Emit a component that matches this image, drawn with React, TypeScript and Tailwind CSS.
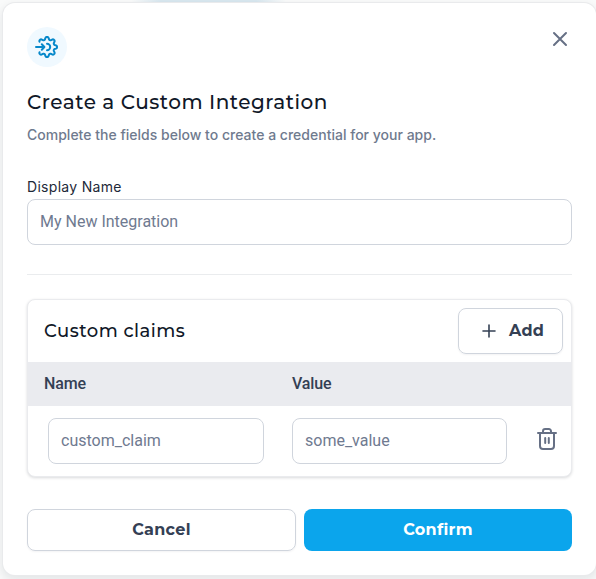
const gearPoints: string[] = [];
for (let deg = -145; deg <= 145; deg += 2) {
  const t = (deg * Math.PI) / 180;
  const r = 8.75 + 1.4 * Math.tanh(1.5 * Math.cos(8 * t));
  gearPoints.push(`${(12 + r * Math.cos(t)).toFixed(2)} ${(12 + r * Math.sin(t)).toFixed(2)}`);
}

function IntegrationIcon() {
  return (
    <svg className="size-6" viewBox="0 0 24 24" fill="none" stroke="currentColor" strokeWidth="2" strokeLinecap="round" strokeLinejoin="round">
      <path d={`M${gearPoints.join("L")}`} />
      <path d="M1 12h8M6.8 9.3 9.4 12l-2.6 2.7M12 8.8a3.2 3.2 0 0 1 0 6.4" />
    </svg>
  );
}

function TrashIcon() {
  return (
    <svg className="h-6 w-6 text-[#667085]" viewBox="0 0 24 24" fill="none" stroke="currentColor" strokeWidth="2" strokeLinecap="round" strokeLinejoin="round">
      <path d="M3 5.9h18M5 5.9v13.2a3 3 0 0 0 3 3h8a3 3 0 0 0 3-3V5.9M8 5.5V4.2a2.2 2.2 0 0 1 2.2-2.2h3.6A2.2 2.2 0 0 1 16 4.2v1.3M10.2 11v5M13.8 11v5" />
    </svg>
  );
}

const heading = "font-['Montserrat','Inter',sans-serif]";
const field = "block h-[46px] rounded-lg border border-[#d0d5dd] bg-white px-3 pb-[2px] font-['Roboto',sans-serif] text-base text-[#344054] placeholder:text-[#6f7a90] placeholder:opacity-100 outline-none";

export default function App() {
  return (
    <div className="h-[579px] w-[596px] overflow-hidden bg-[#f9fafa] bg-[linear-gradient(90deg,#f9fafa_0%,#f9fafa_22%,#d8e7ef_27%,#d8e7ef_43%,#f9fafa_48%)] bg-[length:100%_20px] bg-no-repeat pl-[3px] pt-[3px] font-['Inter',sans-serif]">
      <div className="h-[572px] w-[593px] rounded-xl bg-white px-6 pt-6 shadow-[0_0_0_1px_#e9eaec,0_4px_8px_2px_rgba(16,24,40,0.08)]">
        <div className="flex h-10 items-start justify-between">
          <div className="flex size-10 items-center justify-center rounded-full bg-[#f0f9ff] text-[#0788ca]">
            <IntegrationIcon />
          </div>
          <button aria-label="Close" className="flex size-6 items-center justify-center text-[#667085]">
            <svg className="size-6" viewBox="0 0 24 24" fill="none" stroke="currentColor" strokeWidth="2" strokeLinecap="round">
              <path d="m6 6 12 12M18 6 6 18" />
            </svg>
          </button>
        </div>
        <h1 className={`${heading} mt-5 whitespace-nowrap text-[20px] font-medium leading-[30px] tracking-[0.52px] text-[#101828]`}>Create a Custom Integration</h1>
        <p className="mt-2 whitespace-nowrap text-sm font-[450] leading-5 tracking-[0.01px] text-[#6f7a8e]">Complete the fields below to create a credential for your app.</p>
        <label className="mt-8 block">
          <span className="block text-sm leading-5 tracking-[0.3px] text-[#1d2939]">Display Name</span>
          <input className={`${field} mt-[2px] w-full`} placeholder="My New Integration" />
        </label>
        <div className="mt-[29px] h-px bg-[#eaecee]" />
        <section className="mt-6 h-[178px] overflow-hidden rounded-lg border border-[#eaebee] bg-white shadow-[0_1px_3px_rgba(16,24,40,0.16)]">
          <div className="flex h-[62px] items-center justify-between pl-4 pr-2">
            <h2 className={`${heading} text-lg font-medium leading-7 tracking-[0.47px] text-[#101828]`}>Custom claims</h2>
            <button className={`${heading} flex h-[46px] w-[105px] items-center rounded-lg border border-[#d0d5dd] pl-[22px] text-base font-bold tracking-[0.3px] text-[#344054] shadow-[0_1px_2px_rgba(16,24,40,0.05)]`}>
              <svg className="mr-[12px] size-4" viewBox="0 0 16 16" fill="none" stroke="currentColor" strokeWidth="1.6" strokeLinecap="round">
                <path d="M8 2v12M2 8h12" />
              </svg>
              Add
            </button>
          </div>
          <div className="flex h-11 items-center bg-[#eaebef] pl-4 font-['Roboto',sans-serif] text-base font-medium tracking-[-0.15px] text-[#344054]">
            <div className="w-[248px]">Name</div>
            <div>Value</div>
          </div>
          <div className="flex items-center pl-5 pt-3">
            <input className={`${field} w-[216px]`} placeholder="custom_claim" />
            <input className={`${field} ml-7 w-[215px]`} placeholder="some_value" />
            <button aria-label="Delete claim" className="mb-[5px] ml-7"><TrashIcon /></button>
          </div>
        </section>
        <div className={`${heading} mt-8 flex gap-2 text-base font-bold tracking-[0.3px]`}>
          <button className="h-[42px] w-[269px] rounded-lg border border-[#d0d5dd] text-[#344054] shadow-[0_1px_2px_rgba(16,24,40,0.05)]">Cancel</button>
          <button className="h-[42px] w-[268px] rounded-lg bg-[#0ba5ec] text-white">Confirm</button>
        </div>
      </div>
    </div>
  );
}
